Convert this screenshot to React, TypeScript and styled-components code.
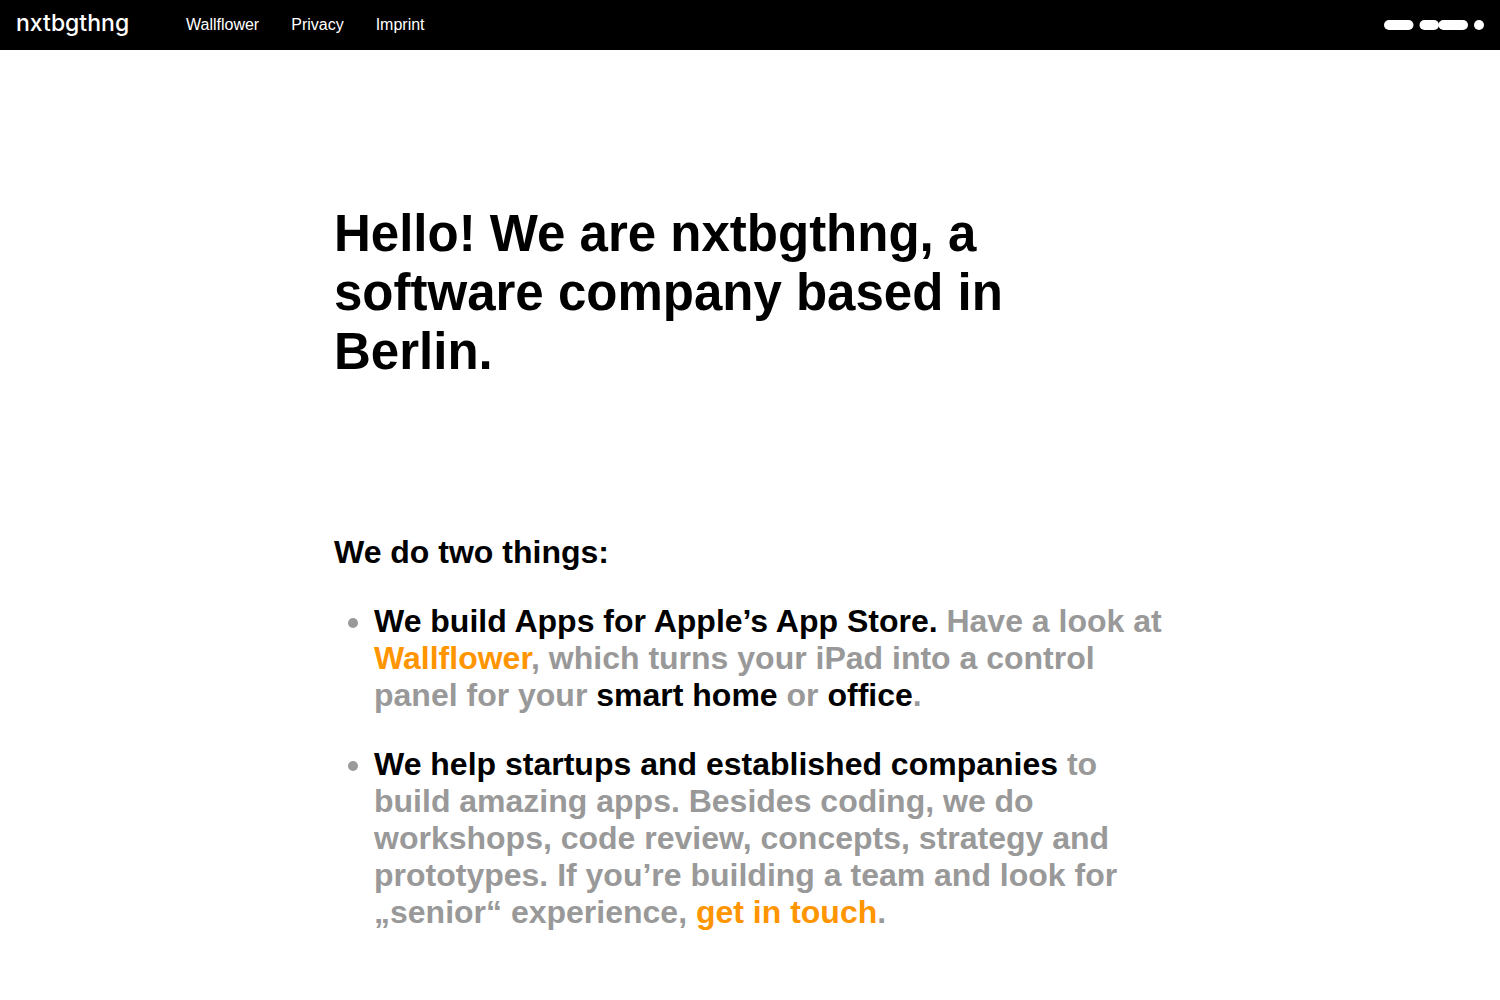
import React from "react";
import styled, { createGlobalStyle } from "styled-components";

const GlobalStyle = createGlobalStyle`
  body {
    margin: 0;
    background: #fff;
    color: #000;
    font-family: "Liberation Sans", Arial, sans-serif;
    font-size: 16px;
  }
`;

const Bar = styled.header`
  display: flex;
  align-items: center;
  height: 50px;
  padding: 0 16px;
  background: #000;
`;

const Logo = styled.a`
  min-width: 138px;
  margin-right: 32px;
  padding-bottom: 4px;
  color: #fff;
  font-family: Inter, sans-serif;
  font-size: 23px;
  font-weight: 500;
  line-height: 32px;
  text-decoration: none;
`;

const Nav = styled.nav`
  display: flex;
  flex: 1;
  gap: 32px;
`;

const NavLink = styled.a`
  color: #fff;
  line-height: 18px;
  text-decoration: none;
`;

const Morse = styled.svg`
  display: block;
  width: 100px;
  height: 10px;
  fill: #fff;
`;

const Main = styled.main`
  box-sizing: border-box;
  max-width: 864px;
  margin: 0 auto;
  padding: 154px 16px 32px;
`;

const Title = styled.h1`
  margin: 0 0 153px;
  font-size: 51px;
  font-weight: 700;
  line-height: 59px;
`;

const Intro = styled.h2`
  margin: 0 0 32px;
  font-size: 32px;
  font-weight: 700;
  line-height: 37px;
`;

const List = styled.ul`
  display: flex;
  flex-direction: column;
  gap: 32px;
  margin: 0;
  padding: 0 0 0 40px;
  color: #999;
  font-size: 32px;
  font-weight: 700;
  line-height: 37px;
`;

const Strong = styled.strong`
  color: #000;
`;

const TextLink = styled.a<{ $plain?: boolean }>`
  color: ${(p) => (p.$plain ? "#000" : "#ff9500")};
  text-decoration: none;
`;

const navItems = ["Wallflower", "Privacy", "Imprint"];

export default function App() {
  return (
    <>
      <GlobalStyle />
      <Bar>
        <Logo href="#home">nxtbgthng</Logo>
        <Nav>
          {navItems.map((item) => (
            <NavLink key={item} href={`#${item.toLowerCase()}`}>
              {item}
            </NavLink>
          ))}
        </Nav>
        <Morse viewBox="0 0 100 10" aria-hidden="true">
          <rect x="0" y="0" width="29.5" height="10" rx="5" />
          <rect x="35.5" y="0" width="19.5" height="10" rx="5" />
          <rect x="54.5" y="0" width="29.5" height="10" rx="5" />
          <circle cx="95" cy="5" r="5" />
        </Morse>
      </Bar>
      <Main>
        <Title>Hello! We are nxtbgthng, a software company based in Berlin.</Title>
        <Intro>We do two things:</Intro>
        <List>
          <li>
            <Strong>We build Apps for Apple’s App Store.</Strong> Have a look at{" "}
            <TextLink href="#wallflower">Wallflower</TextLink>, which turns your
            iPad into a control panel for your{" "}
            <TextLink $plain href="#smart-home">smart home</TextLink> or{" "}
            <TextLink $plain href="#office">office</TextLink>.
          </li>
          <li>
            <Strong>We help startups and established companies</Strong> to build
            amazing apps. Besides coding, we do workshops, code review,
            concepts, strategy and prototypes. If you’re building a team and
            look for „senior“ experience,{" "}
            <TextLink href="#contact">get in touch</TextLink>.
          </li>
        </List>
      </Main>
    </>
  );
}
